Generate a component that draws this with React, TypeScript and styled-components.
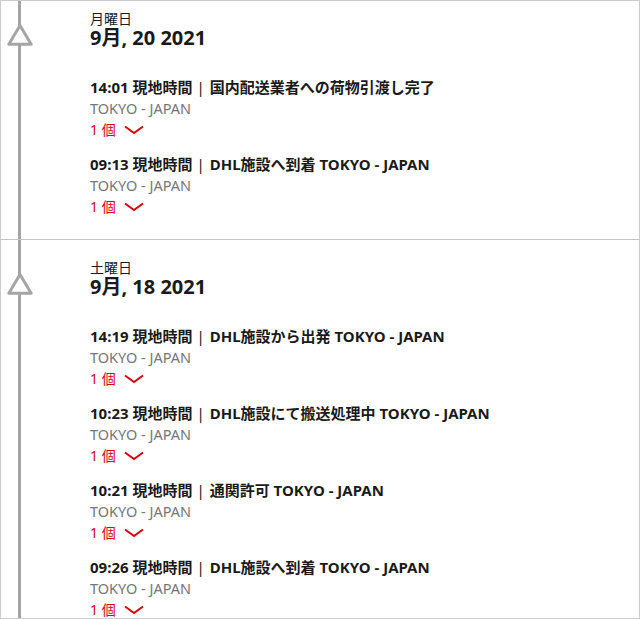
import styled, { createGlobalStyle } from "styled-components";

const GlobalStyle = createGlobalStyle`
  html, body {
    margin: 0;
    padding: 0;
    background: #fff;
  }
  body {
    font-family: "Noto Sans", "Noto Sans CJK JP", sans-serif;
    color: #1a1a1a;
  }
`;

interface Checkpoint {
  time: string;
  title: string;
  location: string;
  pieces: number;
}

interface Day {
  weekday: string;
  date: string;
  events: Checkpoint[];
}

const days: Day[] = [
  {
    weekday: "月曜日",
    date: "9月, 20 2021",
    events: [
      { time: "14:01", title: "国内配送業者への荷物引渡し完了", location: "TOKYO - JAPAN", pieces: 1 },
      { time: "09:13", title: "DHL施設へ到着 TOKYO - JAPAN", location: "TOKYO - JAPAN", pieces: 1 },
    ],
  },
  {
    weekday: "土曜日",
    date: "9月, 18 2021",
    events: [
      { time: "14:19", title: "DHL施設から出発 TOKYO - JAPAN", location: "TOKYO - JAPAN", pieces: 1 },
      { time: "10:23", title: "DHL施設にて搬送処理中 TOKYO - JAPAN", location: "TOKYO - JAPAN", pieces: 1 },
      { time: "10:21", title: "通関許可 TOKYO - JAPAN", location: "TOKYO - JAPAN", pieces: 1 },
      { time: "09:26", title: "DHL施設へ到着 TOKYO - JAPAN", location: "TOKYO - JAPAN", pieces: 1 },
    ],
  },
];

const Frame = styled.div`
  width: 640px;
  height: 619px;
  box-sizing: border-box;
  border: 1px solid #cccccc;
  overflow: hidden;
  background: #fff;
`;

const Section = styled.section<{ $first?: boolean }>`
  display: flex;
  padding: ${(p) => (p.$first ? "9px" : "19px")} 0 22px;
  border-top: ${(p) => (p.$first ? "none" : "1px solid #c4c4c4")};
  background: linear-gradient(#a5a5a5, #a5a5a5) no-repeat 17px 0 / 3px 100%;
`;

const Rail = styled.div`
  width: 89px;
  flex: none;
  padding-left: 6px;
  box-sizing: border-box;
`;

const Marker = styled.svg`
  display: block;
  margin-top: 13px;
`;

const Content = styled.div`
  flex: 1;
`;

const Weekday = styled.div`
  font-size: 14px;
  line-height: 18px;
  color: #1a1a1a;
`;

const DateLine = styled.div`
  font-size: 20px;
  line-height: 20px;
  font-weight: 700;
  color: #1a1a1a;
`;

const EventList = styled.ul`
  list-style: none;
  margin: 29px 0 0;
  padding: 0;
  display: flex;
  flex-direction: column;
  gap: 14px;
`;

const Event = styled.li`
  font-size: 14px;
  line-height: 21px;
`;

const Title = styled.div`
  font-size: 15px;
  font-weight: 700;
  color: #1a1a1a;
`;

const Bar = styled.span`
  font-weight: 400;
  margin: 0 5px 0 4px;
`;

const Location = styled.div`
  font-size: 14.5px;
  color: #767676;
`;

const Pieces = styled.button`
  display: flex;
  align-items: center;
  gap: 8px;
  padding: 0;
  border: 0;
  background: none;
  font: inherit;
  color: #d40511;
  cursor: pointer;
`;

const Chevron = () => (
  <svg width="20" height="10" viewBox="0 0 20 10">
    <path d="M1 1.5 L10 8 L19 1.5" fill="none" stroke="#d40511" strokeWidth="2" />
  </svg>
);

const Triangle = () => (
  <Marker width="26" height="23" viewBox="0 0 26 23">
    <polygon
      points="13,2.5 1.8,21.2 24.2,21.2"
      fill="#fff"
      stroke="#a5a5a5"
      strokeWidth="3"
      strokeLinejoin="round"
    />
  </Marker>
);

export default function App() {
  return (
    <>
      <GlobalStyle />
      <Frame>
        {days.map((day, i) => (
          <Section key={day.date} $first={i === 0}>
            <Rail>
              <Triangle />
            </Rail>
            <Content>
              <Weekday>{day.weekday}</Weekday>
              <DateLine>{day.date}</DateLine>
              <EventList>
                {day.events.map((ev) => (
                  <Event key={ev.time}>
                    <Title>
                      {ev.time} 現地時間<Bar>|</Bar>
                      {ev.title}
                    </Title>
                    <Location>{ev.location}</Location>
                    <Pieces>
                      <span>{ev.pieces} 個</span>
                      <Chevron />
                    </Pieces>
                  </Event>
                ))}
              </EventList>
            </Content>
          </Section>
        ))}
      </Frame>
    </>
  );
}
